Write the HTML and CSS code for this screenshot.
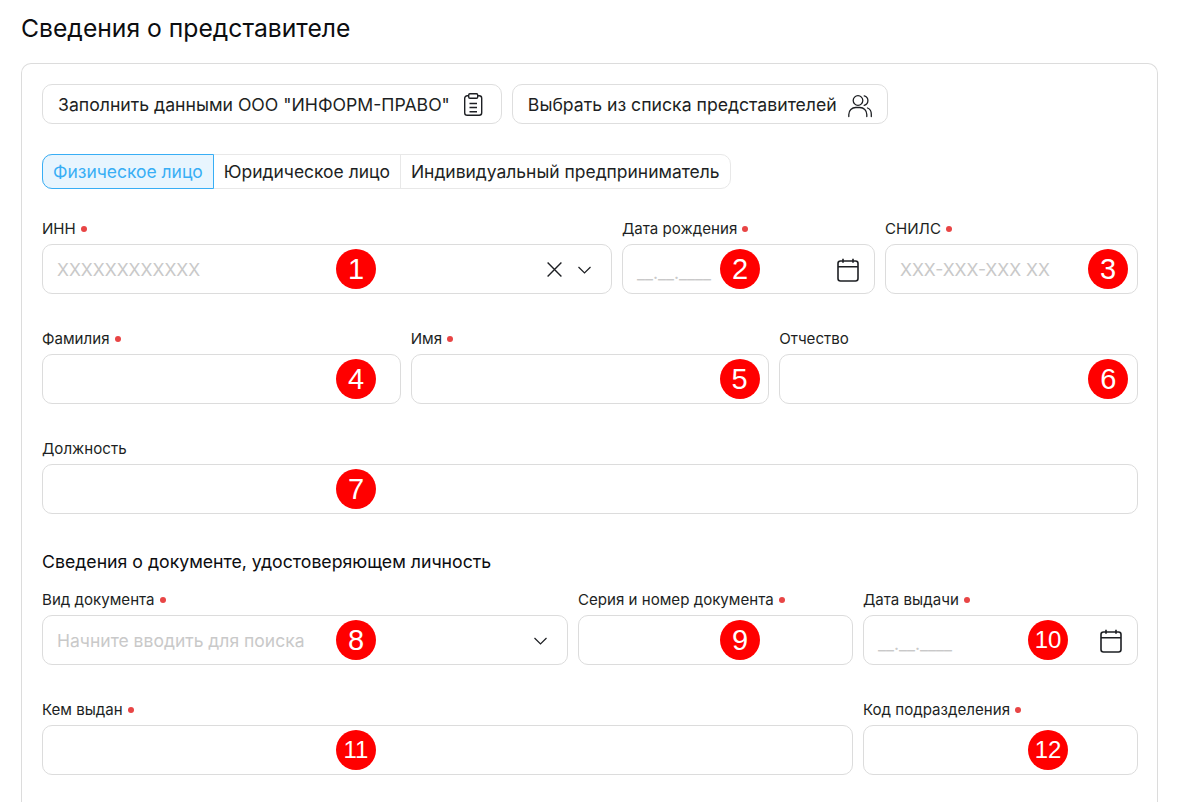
FILE: index.html
```html
<!DOCTYPE html>
<html lang="ru">
<head>
<meta charset="utf-8">
<title>Сведения о представителе</title>
<link rel="stylesheet" href="styles.css">
</head>
<body>
<main class="page">
  <h1 class="title">Сведения о представителе</h1>
  <section class="card">
    <div class="actions">
      <button class="btn">Заполнить данными ООО "ИНФОРМ-ПРАВО"
        <svg class="ic" viewBox="0 0 24 24" fill="none" stroke="currentColor" stroke-width="1.4"><rect x="2.700" y="3.700" width="17" height="19.600" rx="2.500"/><rect x="6.700" y="1.700" width="9" height="4.500" rx="1.200" fill="#fff"/><path d="M7.500 11.500h7.500M7.500 15.500h7.500M7.500 19.800h7.500"/></svg>
      </button>
      <button class="btn">Выбрать из списка представителей
        <svg class="ic ic-users" viewBox="0 0 24 24" fill="none" stroke="currentColor" stroke-width="1.3" stroke-linecap="round"><circle cx="10" cy="8.500" r="4.800"/><path d="M16.200 3.800a4.900 4.900 0 0 1 0 9.500M.8 24.500v-2c0-4 3-7 7-7h4c4 0 7 3 7 7v2M19.500 16c2.300.8 3.800 3.200 3.800 6.200v2.300"/></svg>
      </button>
    </div>
    <div class="tabs">
      <span class="tab active">Физическое лицо</span>
      <span class="tab">Юридическое лицо</span>
      <span class="tab">Индивидуальный предприниматель</span>
    </div>

    <div class="row r1">
      <div class="field">
        <label class="lbl">ИНН <i class="req"></i></label>
        <div class="input"><span class="ph">XXXXXXXXXXXX</span>
          <svg class="x" viewBox="0 0 16 16" fill="none" stroke="currentColor" stroke-width="1.3"><path d="M1.500 1.500l13 13M14.500 1.500l-13 13"/></svg>
          <svg class="chev" viewBox="0 0 14 8" fill="none" stroke="currentColor" stroke-width="1.2"><path d="M1 1l6 6 6-6"/></svg>
          <b class="badge b1">1</b></div>
      </div>
      <div class="field">
        <label class="lbl">Дата рождения <i class="req"></i></label>
        <div class="input"><span class="ph date">__.__.____</span>
          <svg class="cal" viewBox="0 0 22 24" fill="none" stroke="currentColor" stroke-width="1.600"><rect x="1" y="3" width="20" height="20" rx="2.500"/><path d="M1 8.800h20M6 .8v4M16 .8v4"/></svg>
          <b class="badge b2">2</b></div>
      </div>
      <div class="field">
        <label class="lbl">СНИЛС <i class="req"></i></label>
        <div class="input"><span class="ph">XXX-XXX-XXX XX</span><b class="badge b3">3</b></div>
      </div>
    </div>

    <div class="row r2">
      <div class="field"><label class="lbl">Фамилия <i class="req"></i></label><div class="input"><b class="badge b4">4</b></div></div>
      <div class="field"><label class="lbl">Имя <i class="req"></i></label><div class="input"><b class="badge b5">5</b></div></div>
      <div class="field"><label class="lbl">Отчество</label><div class="input"><b class="badge b6">6</b></div></div>
    </div>

    <div class="row r3">
      <div class="field"><label class="lbl">Должность</label><div class="input"><b class="badge b7">7</b></div></div>
    </div>

    <h2 class="sub">Сведения о документе, удостоверяющем личность</h2>

    <div class="row r4">
      <div class="field">
        <label class="lbl">Вид документа <i class="req"></i></label>
        <div class="input"><span class="ph">Начните вводить для поиска</span>
          <svg class="chev" viewBox="0 0 14 8" fill="none" stroke="currentColor" stroke-width="1.2"><path d="M1 1l6 6 6-6"/></svg>
          <b class="badge b8">8</b></div>
      </div>
      <div class="field"><label class="lbl">Серия и номер документа <i class="req"></i></label><div class="input"><b class="badge b9">9</b></div></div>
      <div class="field">
        <label class="lbl">Дата выдачи <i class="req"></i></label>
        <div class="input"><span class="ph date">__.__.____</span>
          <svg class="cal" viewBox="0 0 22 24" fill="none" stroke="currentColor" stroke-width="1.600"><rect x="1" y="3" width="20" height="20" rx="2.500"/><path d="M1 8.800h20M6 .8v4M16 .8v4"/></svg>
          <b class="badge b10">10</b></div>
      </div>
    </div>

    <div class="row r5">
      <div class="field"><label class="lbl">Кем выдан <i class="req"></i></label><div class="input"><b class="badge b11">11</b></div></div>
      <div class="field"><label class="lbl">Код подразделения <i class="req"></i></label><div class="input"><b class="badge b12">12</b></div></div>
    </div>
  </section>
</main>
</body>
</html>
```
FILE: styles.css
```css
* { box-sizing: border-box; }
html, body { margin: 0; height: 100%; overflow: hidden; background: #fff; }
body { font-family: Inter, "Liberation Sans", sans-serif; color: #1d1f23; }
.page { padding: 14px 21px 0; }
.title { margin: 0 0 20px; font-size: 24.7px; line-height: 29px; font-weight: 400; color: #0c0d10; }
.card { border: 1px solid #dcdcdc; border-bottom: 0; border-radius: 10px 10px 0 0; padding: 20px 19px 60px 20px; }
.actions { display: flex; gap: 10px; }
.btn { display: flex; align-items: center; gap: 12px; height: 40px; padding: 0 15px; border: 1px solid #dedede; border-radius: 10px; background: #fff; font: 400 17.65px Inter, sans-serif; color: #1d1f23; white-space: nowrap; }
.ic { width: 24px; height: 24px; flex: none; overflow: visible; }
.ic-users { margin-left: -1px; }
.tabs { display: inline-flex; margin-top: 30px; height: 35px; border: 1px solid #e8e8e8; border-radius: 10px; vertical-align: top; }
.tab { display: flex; align-items: center; padding: 0 10px; font-size: 17.47px; border-left: 1px solid #e8e8e8; color: #1d1f23; }
.tab:first-child { border-left: 0; }
.tab.active { margin: -1px 0 -1px -1px; height: 35px; border: 1px solid #38aef5; border-radius: 10px 0 0 10px; background: #e8f5fe; color: #38aef5; }
.tab.active + .tab { border-left: 0; }
.row { display: grid; column-gap: 10px; margin-top: 33px; }
.r1 { grid-template-columns: 570px 1fr 1fr; margin-top: 28px; }
.r2 { grid-template-columns: 1fr 1fr 1fr; }
.r3 { grid-template-columns: 1fr; }
.r4 { grid-template-columns: 526px 1fr 1fr; margin-top: 15px; }
.r5 { grid-template-columns: 811px 1fr; }
.lbl { display: flex; align-items: center; gap: 5px; height: 24px; margin-bottom: 3px; font-size: 15.1px; line-height: 22px; white-space: nowrap; }
.req { display: block; width: 6px; height: 6px; border-radius: 50%; background: #e84545; }
.input { position: relative; display: flex; align-items: center; height: 50px; padding: 0 14px; border: 1px solid #dcdcdc; border-radius: 10px; background: #fff; }
.ph { font-size: 17.5px; color: #c9c9c9; white-space: nowrap; }
.date { position: relative; top: 3px; }
.x { position: absolute; right: 48px; top: 16px; width: 17px; height: 17px; }
.chev { position: absolute; right: 19px; top: 20.500px; width: 15px; height: 8px; }
.cal { position: absolute; right: 15px; top: 13px; width: 22px; height: 24px; }
.sub { margin: 37px 0 0; font-size: 17.7px; line-height: 22px; font-weight: 400; color: #0c0d10; }
.badge { position: absolute; top: 4px; display: flex; align-items: center; justify-content: center; width: 40px; height: 40px; border-radius: 50%; background: #f00; color: #fff; font: 400 29px "Liberation Sans", sans-serif; }
.b1 { left: 293px; }
.b2 { left: 97px; }
.b3 { left: 202px; }
.b4 { left: 293px; }
.b5 { left: 308px; }
.b6 { left: 308px; }
.b7 { left: 293px; }
.b8 { left: 293px; }
.b9 { left: 141px; }
.b10, .b12 { left: 164px; font-size: 24px; }
.b11 { left: 293px; font-size: 24px; }
```
